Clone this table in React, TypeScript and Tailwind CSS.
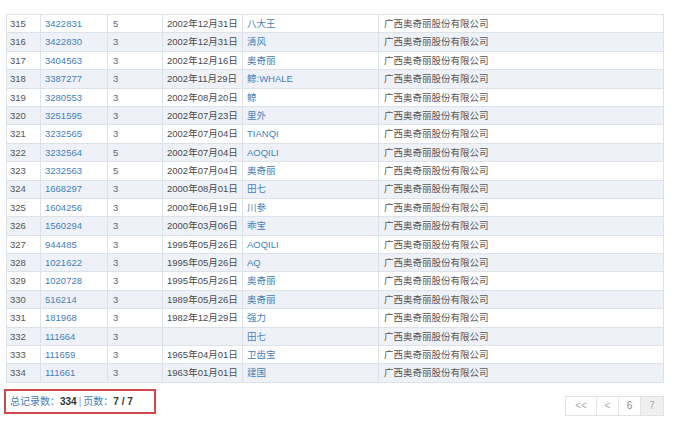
const rows: [number, string, string, string, string][] = [
  [315, '3422831', '5', '2002年12月31日', '八大王'],
  [316, '3422830', '3', '2002年12月31日', '清风'],
  [317, '3404563', '3', '2002年12月16日', '奥奇丽'],
  [318, '3387277', '3', '2002年11月29日', '鲸:WHALE'],
  [319, '3280553', '3', '2002年08月20日', '鲸'],
  [320, '3251595', '3', '2002年07月23日', '里外'],
  [321, '3232565', '3', '2002年07月04日', 'TIANQI'],
  [322, '3232564', '5', '2002年07月04日', 'AOQILI'],
  [323, '3232563', '5', '2002年07月04日', '奥奇丽'],
  [324, '1668297', '3', '2000年08月01日', '田七'],
  [325, '1604256', '3', '2000年06月19日', '川参'],
  [326, '1560294', '3', '2000年03月06日', '乖宝'],
  [327, '944485', '3', '1995年05月26日', 'AOQILI'],
  [328, '1021622', '3', '1995年05月26日', 'AQ'],
  [329, '1020728', '3', '1995年05月26日', '奥奇丽'],
  [330, '516214', '3', '1989年05月26日', '奥奇丽'],
  [331, '181968', '3', '1982年12月29日', '强力'],
  [332, '111664', '3', '', '田七'],
  [333, '111659', '3', '1965年04月01日', '卫齿宝'],
  [334, '111661', '3', '1963年01月01日', '建国'],
];

const cell = 'h-[18.4px] border border-[#dde2e8] pl-[3px] py-0 leading-none whitespace-nowrap';

export default function App() {
  return (
    <div
      className="w-[678px] h-[433px] bg-white pl-[6px] pt-[14px] text-[9.5px] text-[#4a4a4a]"
      style={{ fontFamily: '"Liberation Sans", "Noto Sans CJK SC", sans-serif' }}
    >
      <table className="w-[658px] border-collapse table-fixed">
        <colgroup>
          <col className="w-[34px]" />
          <col className="w-[67px]" />
          <col className="w-[55px]" />
          <col className="w-[80px]" />
          <col className="w-[136px]" />
          <col />
        </colgroup>
        <tbody>
          {rows.map(([no, reg, cls, date, name]) => (
            <tr key={no} className={no % 2 === 0 ? 'bg-[#eef2f8]' : 'bg-white'}>
              <td className={cell + ' text-[#555]'}>{no}</td>
              <td className={cell + ' text-[#4580ba] pl-[4px]'}>{reg}</td>
              <td className={cell + ' text-[#666] pl-[5px]'}>{cls}</td>
              <td className={cell + ' text-[#4a4a4a] pl-[4px]'}>{date}</td>
              <td className={cell + ' text-[#4580ba] pl-[4px]'}>{name}</td>
              <td className={cell + ' text-[#555] pl-[5px]'}>广西奥奇丽股份有限公司</td>
            </tr>
          ))}
        </tbody>
      </table>

      <div className="w-[658px] flex justify-between items-start mt-[6px]">
        <div className="ml-[-2px] w-[152px] h-[25px] border-2 border-[#d2484c] flex items-center pl-[4px] text-[10px]">
          <span className="text-[#4580ba]">总记录数：</span>
          <span className="font-bold text-[#333]">334</span>
          <span className="text-[#999] px-[2px]">|</span>
          <span className="text-[#4580ba]">页数：</span>
          <span className="font-bold text-[#333]">7 / 7</span>
        </div>
        <div className="mt-[7px] flex h-[20px] border border-[#e2e2e2] text-[10px] text-[#aaa]">
          <span className="w-[31px] flex items-center justify-center border-r border-[#e8e8e8]">&lt;&lt;</span>
          <span className="w-[22px] flex items-center justify-center border-r border-[#e8e8e8]">&lt;</span>
          <span className="w-[22px] flex items-center justify-center border-r border-[#e2e2e2] text-[#888]">6</span>
          <span className="w-[22px] flex items-center justify-center bg-[#f0f0f0] text-[#aaa]">7</span>
        </div>
      </div>
    </div>
  );
}
